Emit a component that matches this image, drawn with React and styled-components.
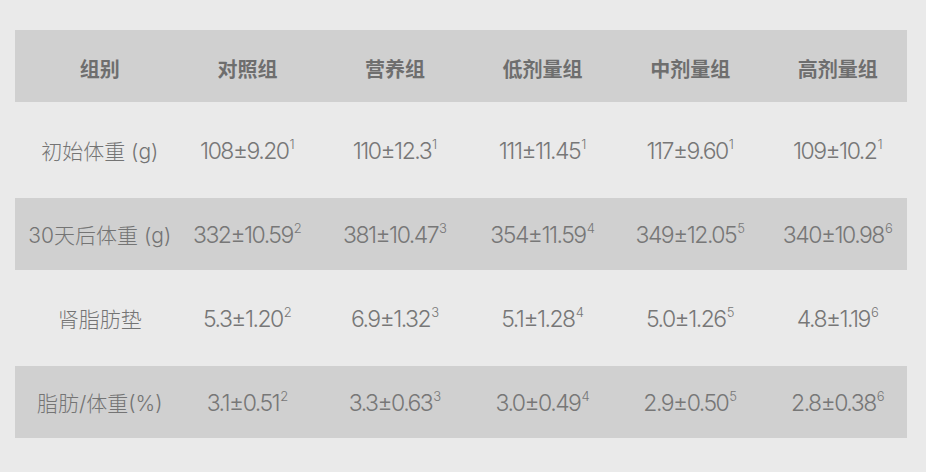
import React from 'react';
import styled, { createGlobalStyle } from 'styled-components';

const GlobalStyle = createGlobalStyle`
  body {
    margin: 0;
    background: #eaeaea;
    font-family: "Noto Sans CJK SC", "Noto Sans", sans-serif;
  }
`;

const header = ['组别', '对照组', '营养组', '低剂量组', '中剂量组', '高剂量组'];

const rows = [
  {
    label: '初始体重 (g)',
    tall: true,
    values: [
      ['108±9.20', 1],
      ['110±12.3', 1],
      ['111±11.45', 1],
      ['117±9.60', 1],
      ['109±10.2', 1],
    ],
  },
  {
    label: '30天后体重 (g)',
    values: [
      ['332±10.59', 2],
      ['381±10.47', 3],
      ['354±11.59', 4],
      ['349±12.05', 5],
      ['340±10.98', 6],
    ],
  },
  {
    label: '肾脂肪垫',
    tall: true,
    values: [
      ['5.3±1.20', 2],
      ['6.9±1.32', 3],
      ['5.1±1.28', 4],
      ['5.0±1.26', 5],
      ['4.8±1.19', 6],
    ],
  },
  {
    label: '脂肪/体重(%)',
    values: [
      ['3.1±0.51', 2],
      ['3.3±0.63', 3],
      ['3.0±0.49', 4],
      ['2.9±0.50', 5],
      ['2.8±0.38', 6],
    ],
  },
];

function App() {
  return (
    <>
      <GlobalStyle />
      <Page>
        <Table>
          <Row $shaded $height={72}>
            {header.map((h) => (
              <HeadCell key={h}>{h}</HeadCell>
            ))}
          </Row>
          {rows.map((row) => (
            <Row key={row.label} $shaded={!row.tall} $height={row.tall ? 96 : 72}>
              <Label>{row.label}</Label>
              {row.values.map(([value, note], i) => (
                <Value key={i}>
                  {value}
                  <Note>{note}</Note>
                </Value>
              ))}
            </Row>
          ))}
        </Table>
      </Page>
    </>
  );
}

const Page = styled.div`
  padding: 30px 19px 0 15px;
`;

const Table = styled.div`
  display: flex;
  flex-direction: column;
  width: 892px;
`;

const Row = styled.div`
  display: grid;
  grid-template-columns: repeat(6, 147.6px);
  align-items: center;
  padding-left: 11px;
  height: ${(p) => p.$height}px;
  background: ${(p) => (p.$shaded ? '#d0d0d0' : 'transparent')};
`;

const HeadCell = styled.div`
  text-align: center;
  font-size: 20px;
  font-weight: 700;
  color: #6e6e6e;
  padding-top: 4px;
`;

const Label = styled.div`
  text-align: center;
  font-family: Inter, "Noto Sans CJK SC", sans-serif;
  font-size: 21px;
  font-weight: 300;
  color: #747474;
  white-space: nowrap;
`;

const Value = styled.div`
  text-align: center;
  font-family: Inter, sans-serif;
  font-size: 23px;
  font-weight: 300;
  color: #777777;
  white-space: nowrap;
  letter-spacing: -1.5px;
  padding-top: 2px;
`;

const Note = styled.sup`
  font-size: 13px;
  vertical-align: 10px;
  line-height: 0;
  letter-spacing: 0;
  margin-left: 1px;
`;

export default App;
